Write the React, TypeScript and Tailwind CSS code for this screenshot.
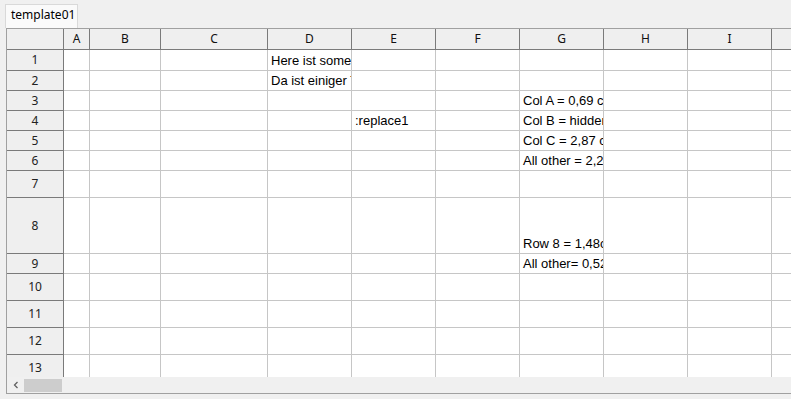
import React from "react";

const cols = [
  { label: "", w: "w-[57px]" },
  { label: "A", w: "w-[26px]" },
  { label: "B", w: "w-[71px]" },
  { label: "C", w: "w-[107px]" },
  { label: "D", w: "w-[84px]" },
  { label: "E", w: "w-[84px]" },
  { label: "F", w: "w-[84px]" },
  { label: "G", w: "w-[84px]" },
  { label: "H", w: "w-[84px]" },
  { label: "I", w: "w-[84px]" },
  { label: "J", w: "w-[84px]" },
];

const rows: Array<{ n: number; h: string; cells?: Record<number, string> }> = [
  { n: 1, h: "h-[21px]", cells: { 4: "Here ist some text" } },
  { n: 2, h: "h-[20px]", cells: { 4: "Da ist einiger Text" } },
  { n: 3, h: "h-[20px]", cells: { 7: "Col A = 0,69 cm" } },
  { n: 4, h: "h-[20px]", cells: { 5: ":replace1", 7: "Col B = hidden" } },
  { n: 5, h: "h-[20px]", cells: { 7: "Col C = 2,87 cm" } },
  { n: 6, h: "h-[20px]", cells: { 7: "All other = 2,26 cm" } },
  { n: 7, h: "h-[27px]" },
  { n: 8, h: "h-[56px]", cells: { 7: "Row 8 = 1,48cm" } },
  { n: 9, h: "h-[20px]", cells: { 7: "All other= 0,52 cm" } },
  { n: 10, h: "h-[27px]" },
  { n: 11, h: "h-[27px]" },
  { n: 12, h: "h-[27px]" },
  { n: 13, h: "h-[27px]" },
];

export default function App() {
  return (
    <div className="w-[791px] h-[399px] bg-[#f0f0f0] relative overflow-hidden font-['Noto_Sans',sans-serif]">
      <div className="pt-[4px] pl-[5px] flex">
        <div className="h-[24px] w-[73px] bg-[#fafafa] border border-b-0 border-[#d9d9d9] text-[12px] leading-[20px] pl-[5px] text-black">
          template01
        </div>
      </div>
      <div className="ml-[6px] border-l border-t border-[#a0a0a0] bg-white">
        <div className="h-[348px] overflow-hidden">
          <div className="flex h-[21px]">
            {cols.map((c, i) => (
              <div
                key={i}
                className={`${c.w} shrink-0 bg-[#efefef] border-r border-b border-[#7a7a7a] flex items-center justify-center text-[12px] text-[#111]`}
              >
                {c.label}
              </div>
            ))}
          </div>
          {rows.map((r) => (
            <div key={r.n} className={`flex ${r.h}`}>
              {cols.map((c, i) =>
                i === 0 ? (
                  <div
                    key={i}
                    className={`${c.w} shrink-0 bg-[#efefef] border-r border-b border-[#7a7a7a] flex items-center justify-center text-[12px] text-[#222]`}
                  >
                    {r.n}
                  </div>
                ) : (
                  <div
                    key={i}
                    className={`${c.w} shrink-0 border-r border-b border-[#c6c6c6] flex items-end overflow-hidden whitespace-nowrap pl-[3px] pb-[1px] text-[13px] leading-[16px] font-['Liberation_Sans',Arial,sans-serif] text-black`}
                  >
                    {r.cells?.[i] ?? ""}
                  </div>
                )
              )}
            </div>
          ))}
        </div>
        <div className="h-[17px] bg-[#f0f0f0] flex items-center border-b border-[#a0a0a0]">
          <div className="w-[17px] h-full flex items-center justify-center">
            <svg width="8" height="8" viewBox="0 0 8 8">
              <path d="M5.5 1 L2.5 4 L5.5 7" stroke="#606060" strokeWidth="1.3" fill="none" />
            </svg>
          </div>
          <div className="w-[38px] h-[13px] bg-[#cdcdcd]" />
        </div>
      </div>
    </div>
  );
}
